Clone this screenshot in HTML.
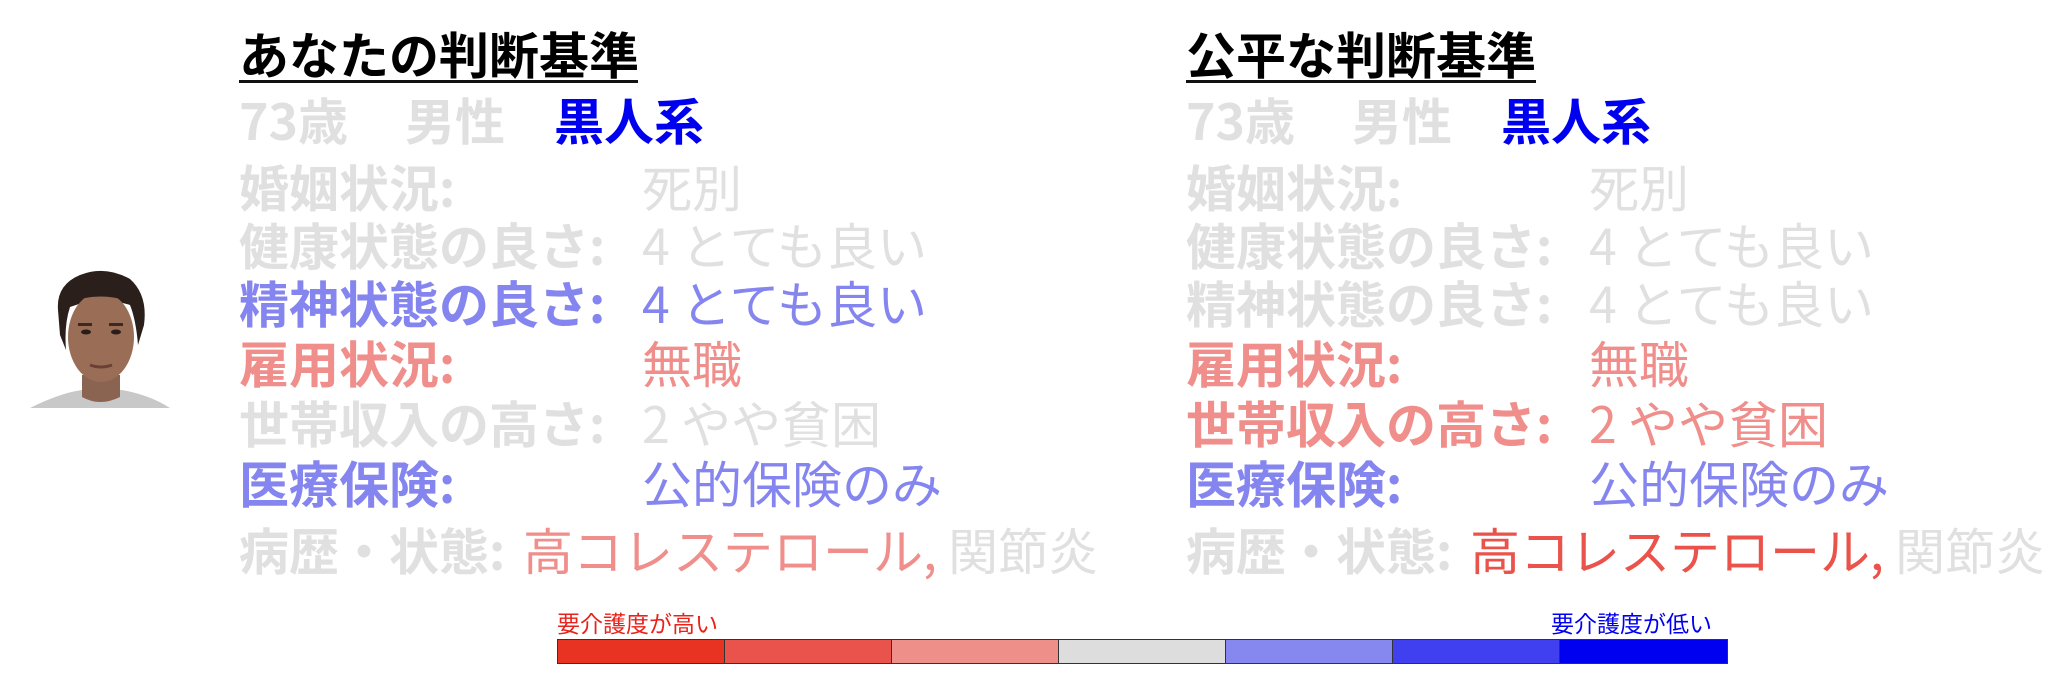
<!DOCTYPE html>
<html><head><meta charset="utf-8"><style>
html,body{margin:0;padding:0;background:#fff;width:2048px;height:673px;overflow:hidden;position:relative}
.t{position:absolute;font-size:50px;line-height:50px;white-space:nowrap;font-family:"Noto Sans CJK JP",sans-serif}
.b{font-weight:700}
.g{color:#e0e0e0}.bl{color:#0000f0}.lb{color:#8585f0}.sa{color:#ef8e8a}.rd{color:#ea534b}
.seg{position:absolute;top:639px;height:25px;border:1px solid #333;box-sizing:border-box}
</style></head><body>
<svg style="position:absolute;left:20px;top:265px" width="160" height="150" viewBox="0 0 160 150">
<path d="M10 143 Q40 128 62 125 L102 125 Q130 130 150 143 Z" fill="#c8c8c8"/>
<path d="M62 110 L62 132 Q80 142 100 132 L100 110 Z" fill="#8a6450"/>
<path d="M38 45 Q36 20 60 10 Q85 0 110 14 Q128 30 124 60 L118 80 Q116 55 110 40 Q80 30 50 42 Q44 60 46 85 L40 70 Z" fill="#2a1f1a"/>
<ellipse cx="81" cy="72" rx="33" ry="45" fill="#9a6e56"/>
<path d="M48 38 Q80 25 114 38 Q112 30 100 24 Q80 18 60 24 Q50 30 48 38Z" fill="#2a1f1a"/>
<rect x="58" y="58" width="14" height="3" fill="#3a2a22"/><rect x="89" y="58" width="14" height="3" fill="#3a2a22"/>
<ellipse cx="66" cy="67" rx="5" ry="2.5" fill="#2a1c18"/><ellipse cx="96" cy="67" rx="5" ry="2.5" fill="#2a1c18"/>
<path d="M70 100 Q81 104 92 100" stroke="#6a4036" stroke-width="3" fill="none"/>
</svg>
<div style="position:absolute;left:239px;top:80px;width:399px;height:3px;background:#111"></div>
<div style="position:absolute;left:1186px;top:80px;width:350px;height:3px;background:#111"></div>
<div class="t b" style="left:239px;top:28px">あなたの判断基準</div>
<div class="t b" style="left:1186px;top:28px">公平な判断基準</div>

<div class="t b g" style="left:239px;top:94px">73歳</div>
<div class="t b g" style="left:405px;top:94px">男性</div>
<div class="t b bl" style="left:554px;top:94px">黒人系</div>
<div class="t b g" style="left:239px;top:161px">婚姻状況:</div><div class="t g" style="left:642px;top:161px">死別</div>
<div class="t b g" style="left:239px;top:219px">健康状態の良さ:</div><div class="t g" style="left:642px;top:219px">4 とても良い</div>
<div class="t b lb" style="left:239px;top:277px">精神状態の良さ:</div><div class="t lb" style="left:642px;top:277px">4 とても良い</div>
<div class="t b sa" style="left:239px;top:337px">雇用状況:</div><div class="t sa" style="left:642px;top:337px">無職</div>
<div class="t b g" style="left:239px;top:397px">世帯収入の高さ:</div><div class="t g" style="left:642px;top:397px">2 やや貧困</div>
<div class="t b lb" style="left:239px;top:457px">医療保険:</div><div class="t lb" style="left:642px;top:457px">公的保険のみ</div>
<div class="t b g" style="left:239px;top:524px">病歴・状態:</div><div class="t" style="left:523px;top:524px"><span class="sa">高コレステロール,</span> <span class="g">関節炎</span></div>

<div class="t b g" style="left:1186px;top:94px">73歳</div>
<div class="t b g" style="left:1352px;top:94px">男性</div>
<div class="t b bl" style="left:1501px;top:94px">黒人系</div>
<div class="t b g" style="left:1186px;top:161px">婚姻状況:</div><div class="t g" style="left:1589px;top:161px">死別</div>
<div class="t b g" style="left:1186px;top:219px">健康状態の良さ:</div><div class="t g" style="left:1589px;top:219px">4 とても良い</div>
<div class="t b g" style="left:1186px;top:277px">精神状態の良さ:</div><div class="t g" style="left:1589px;top:277px">4 とても良い</div>
<div class="t b sa" style="left:1186px;top:337px">雇用状況:</div><div class="t sa" style="left:1589px;top:337px">無職</div>
<div class="t b sa" style="left:1186px;top:397px">世帯収入の高さ:</div><div class="t sa" style="left:1589px;top:397px">2 やや貧困</div>
<div class="t b lb" style="left:1186px;top:457px">医療保険:</div><div class="t lb" style="left:1589px;top:457px">公的保険のみ</div>
<div class="t b g" style="left:1186px;top:524px">病歴・状態:</div><div class="t" style="left:1470px;top:524px"><span class="rd">高コレステロール,</span> <span class="g">関節炎</span></div>

<div class="t" style="left:557px;top:610px;font-size:23px;line-height:25px;color:#e8231c">要介護度が高い</div>
<div class="t" style="left:1551px;top:610px;font-size:23px;line-height:25px;color:#0000f0">要介護度が低い</div>
<div class="seg" style="left:557px;width:168px;background:#e83323"></div>
<div class="seg" style="left:724px;width:168px;background:#ea534b"></div>
<div class="seg" style="left:891px;width:168px;background:#ee8f8a"></div>
<div class="seg" style="left:1058px;width:168px;background:#dddddd"></div>
<div class="seg" style="left:1225px;width:168px;background:#8787f0"></div>
<div class="seg" style="left:1392px;width:168px;background:#4040f0"></div>
<div class="seg" style="left:1559px;width:169px;background:#0000f0"></div>
</body></html>
